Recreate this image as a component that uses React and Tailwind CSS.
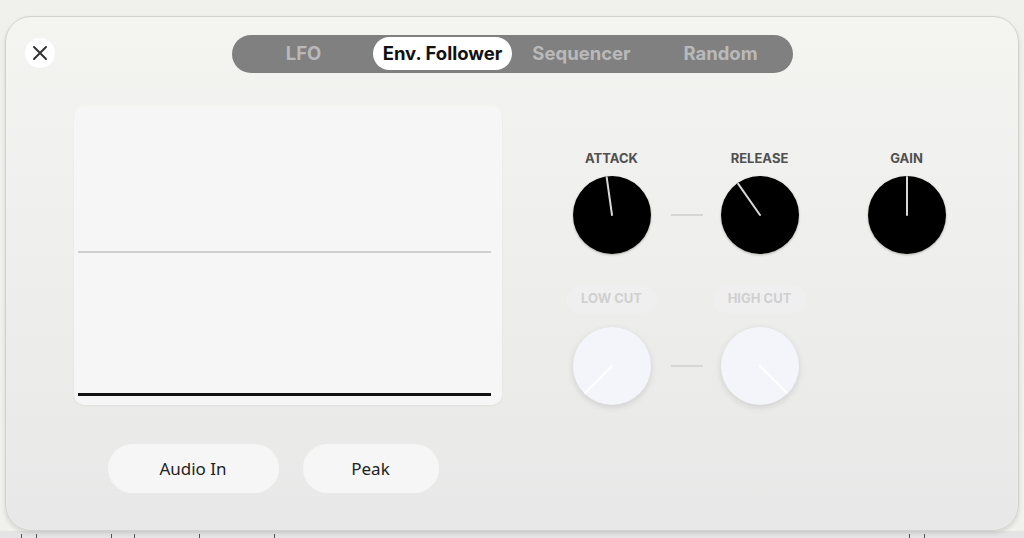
import React from 'react';

const TABS = ['LFO', 'Env. Follower', 'Sequencer', 'Random'];

function Knob({ angle, dark }) {
  const rad = (angle * Math.PI) / 180;
  const x2 = 39 + Math.sin(rad) * 38;
  const y2 = 39 - Math.cos(rad) * 38;
  return (
    <svg width="78" height="78" viewBox="0 0 78 78" className={dark ? 'drop-shadow-[0_1px_1px_rgba(0,0,0,0.25)]' : 'drop-shadow-[0_2px_3px_rgba(0,0,0,0.12)]'}>
      <circle cx="39" cy="39" r="39" fill={dark ? '#000000' : '#f4f4fb'} />
      <line x1="39" y1="39" x2={x2} y2={y2} stroke={dark ? '#d9d9d9' : '#ffffff'} strokeWidth="2" strokeLinecap="round" />
    </svg>
  );
}

function Connector() {
  return (
    <div className="mb-[38px] flex w-[70px] items-center justify-center self-end">
      <div className="ml-[3px] h-[1.5px] w-[32px] bg-[#d6d6d6]" />
    </div>
  );
}

function KnobCol({ label, angle, dark = true, pill = false }) {
  return (
    <div className="flex w-[78px] flex-col items-center">
      {pill ? (
        <div className="flex h-[28px] items-center whitespace-nowrap rounded-full bg-[#efefef] px-[15px] text-[13px] font-bold text-[#d0d0d0]">
          {label}
        </div>
      ) : (
        <div className="whitespace-nowrap text-[13px] font-bold leading-[16px] text-[#505050]">{label}</div>
      )}
      <div className={pill ? 'mt-[14px]' : 'mt-[10px]'}>
        <Knob angle={angle} dark={dark} />
      </div>
    </div>
  );
}

export default function App() {
  return (
    <div className="flex h-[538px] w-[1024px] flex-col overflow-hidden bg-[#f0f0ed] font-['Inter',sans-serif]">
      <div className="px-[5px] pt-[16px]">
        <div className="relative h-[515px] rounded-[26px] border-[1.5px] border-[#d2d2ce] bg-gradient-to-b from-[#f4f4f1] to-[#e8e8e8] shadow-[0_2px_4px_rgba(0,0,0,0.12)]">
          {/* close */}
          <button className="absolute left-[19px] top-[21px] flex h-[30px] w-[30px] items-center justify-center rounded-full bg-white">
            <svg width="16" height="16" viewBox="0 0 16 16">
              <path d="M2 2 L14 14 M14 2 L2 14" stroke="#333" strokeWidth="2" strokeLinecap="round" />
            </svg>
          </button>

          {/* tabs */}
          <div className="flex justify-center pt-[17.5px]">
            <div className="flex h-[38px] rounded-full bg-[#808080] p-[2.5px]">
              {TABS.map((t) => (
                <div
                  key={t}
                  className={
                    t === 'Env. Follower'
                      ? 'flex w-[139px] items-center justify-center rounded-full bg-white text-[18.5px] font-bold text-[#111]'
                      : 'flex w-[139px] items-center justify-center text-[18.5px] font-bold text-[#b9b9b9]'
                  }
                >
                  {t}
                </div>
              ))}
            </div>
          </div>

          <div className="flex pl-[67.5px] pt-[33px]">
            {/* left */}
            <div className="flex flex-col">
              <div className="flex h-[299px] w-[428px] flex-col rounded-[10px] bg-[#f6f6f6] px-[4px] shadow-[0_1px_2px_rgba(0,0,0,0.05)]">
                <div className="mt-[145px] h-[2px] w-[413px] bg-[#cfcfcf]" />
                <div className="mt-[140px] h-[3px] w-[413px] bg-[#111]" />
              </div>
              <div className="mt-[39px] flex gap-[24px] pl-[34px] text-[17px] text-[#222] font-['Noto_Sans',sans-serif]">
                <div className="flex h-[49px] w-[171px] items-center justify-center rounded-full bg-[#f6f6f6] pt-px">Audio In</div>
                <div className="flex h-[49px] w-[136px] items-center justify-center rounded-full bg-[#f6f6f6] pt-px">Peak</div>
              </div>
            </div>

            {/* right */}
            <div className="ml-[71px] mt-[44px] flex flex-col">
              <div className="flex items-end">
                <KnobCol label="ATTACK" angle={-8} />
                <Connector />
                <KnobCol label="RELEASE" angle={-35} />
                <div className="w-[69px]" />
                <KnobCol label="GAIN" angle={0} />
              </div>
              <div className="mt-[31px] flex items-end">
                <KnobCol label="LOW CUT" angle={-135} dark={false} pill />
                <Connector />
                <KnobCol label="HIGH CUT" angle={135} dark={false} pill />
              </div>
            </div>
          </div>
        </div>
      </div>
      <div className="flex flex-1 items-end gap-[14px] bg-[#e4e4e4] pl-[21px]">
        <div className="h-[4px] w-px bg-[#555]" />
        <div className="h-[4px] w-px bg-[#555]" />
        <div className="ml-[60px] h-[4px] w-px bg-[#555]" />
        <div className="ml-[8px] h-[4px] w-px bg-[#555]" />
        <div className="ml-[50px] h-[4px] w-px bg-[#555]" />
        <div className="ml-[60px] h-[4px] w-px bg-[#555]" />
        <div className="ml-[620px] h-[4px] w-px bg-[#555]" />
        <div className="h-[4px] w-px bg-[#555]" />
      </div>
    </div>
  );
}
